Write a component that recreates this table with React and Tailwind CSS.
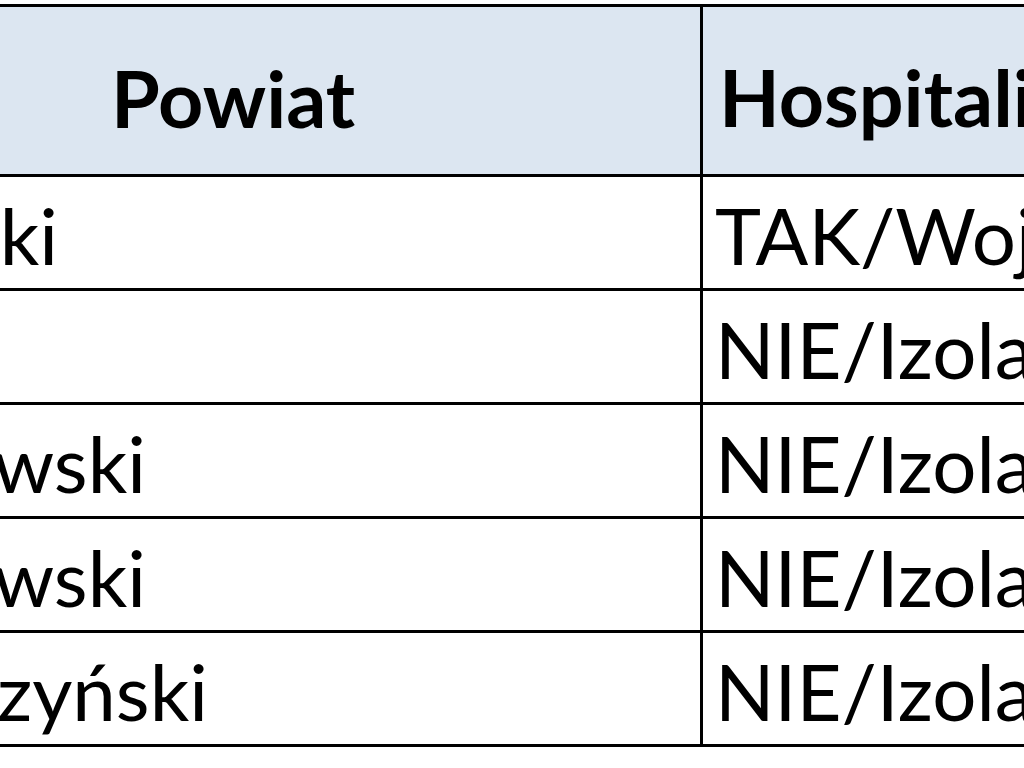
export default function App() {
  const font = { fontFamily: '"Lato", "Noto Sans", sans-serif' };
  const rows = [
    { left: "kaliski", mr: "mr-[642px]", right: "TAK/Wojewódzki Szpital" },
    { left: "Kalisz", mr: "mr-[706px]", right: "NIE/Izolacja domowa" },
    { left: "ostrowski", mr: "mr-[554px]", right: "NIE/Izolacja domowa" },
    { left: "ostrowski", mr: "mr-[554px]", right: "NIE/Izolacja domowa" },
    { left: "krotoszyński", mr: "mr-[492px]", right: "NIE/Izolacja domowa" },
  ];
  return (
    <div className="w-[1024px] h-[768px] bg-white overflow-hidden pt-[4px] text-black" style={font}>
      <div className="border-t-[3px] border-black">
        <div className="flex h-[170px] bg-[#dce6f1] border-b-[3px] border-black">
          <div className="w-[700px] shrink-0 pt-[51px] pl-[111px] text-[79px] leading-none font-bold whitespace-nowrap">
            Powiat
          </div>
          <div className="flex-1 min-w-0 border-l-[3px] border-black pt-[50px] pl-[16px] text-[79px] leading-none font-bold whitespace-nowrap overflow-hidden">
            Hospitalizacja
          </div>
        </div>
        {rows.map((r, i) => (
          <div key={i} className="flex h-[114px] border-b-[3px] border-black">
            <div className="w-[700px] shrink-0 overflow-hidden flex justify-end pt-[19px] text-[78px] leading-none whitespace-nowrap">
              <span className={`shrink-0 ${r.mr}`}>{r.left}</span>
            </div>
            <div className="flex-1 min-w-0 border-l-[3px] border-black pt-[19px] pl-[12px] text-[78px] leading-none whitespace-nowrap overflow-hidden">
              {r.right}
            </div>
          </div>
        ))}
      </div>
    </div>
  );
}
